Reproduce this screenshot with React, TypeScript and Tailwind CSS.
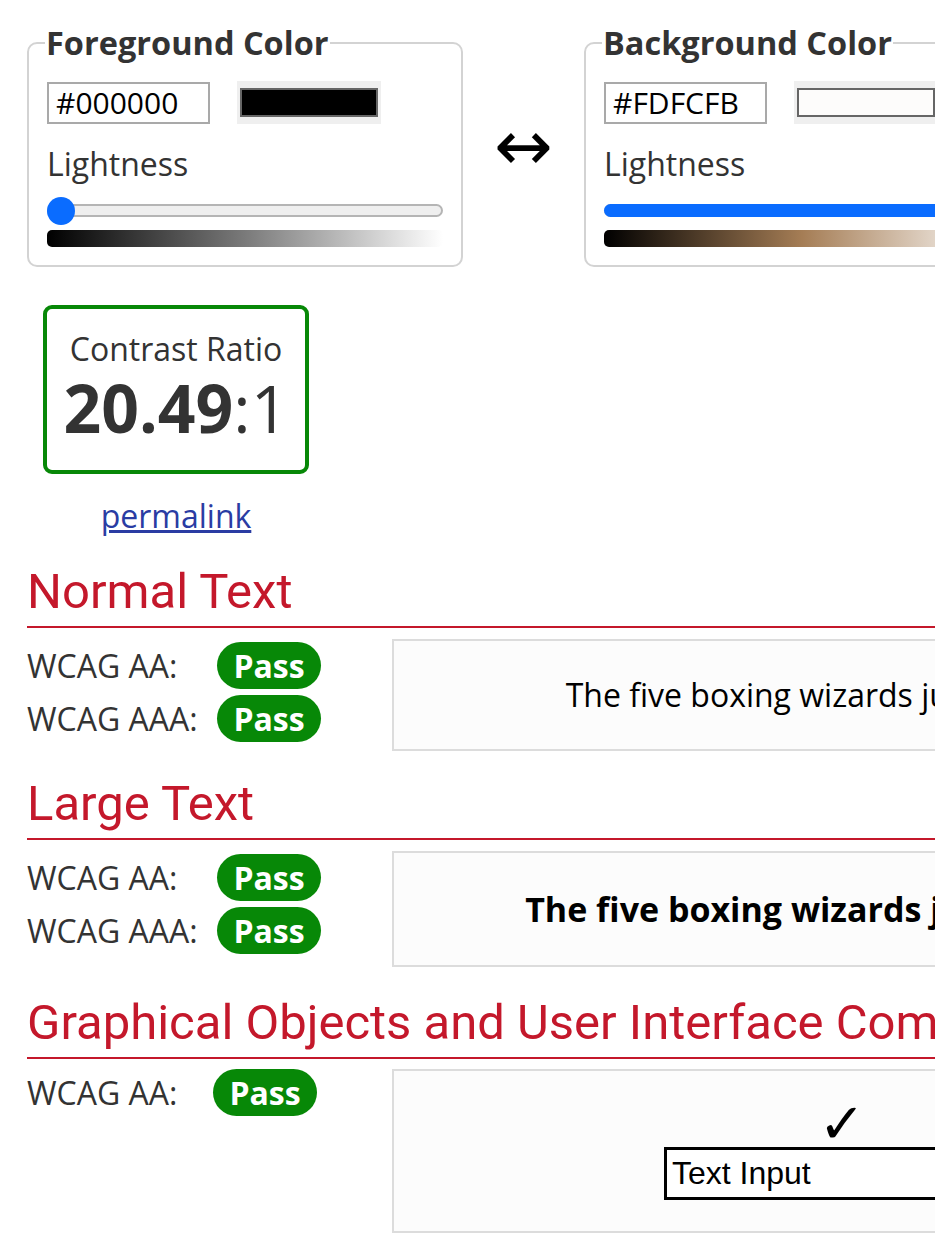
import type { ReactNode } from "react";

const RED = "text-[#c4182b]";

interface ColorPanelProps {
	legend: string;
	hex: string;
	swatch: string;
	thumbAt: number;
	gradient: string;
}

function ColorPanel({ legend, hex, swatch, thumbAt, gradient }: Readonly<ColorPanelProps>) {
	return (
		<fieldset className="w-[436px] shrink-0 rounded-[10px] border-2 border-[#d3d3d3] px-[18px] pb-[18px] pt-[20px]">
			<legend className="-ml-[2px] px-[1px] text-[32.5px] font-bold leading-[36px] text-[#333]">{legend}</legend>
			<div className="flex items-center gap-[27px]">
				<div className="flex h-[42px] w-[163px] items-center border-2 border-[#a9a9a9] bg-white pl-[7px] text-[30px] text-black">
					{hex}
				</div>
				<div className="flex h-[43px] w-[144px] items-center bg-[#efefef] px-[3px]">
					<div className="h-[29px] w-full border-2 border-[#666]" style={{ background: swatch }} />
				</div>
			</div>
			<div className="mt-[20px] text-[32px] leading-[40px] text-[#333]">Lightness</div>
			<div className="relative mt-[13px] h-[28px]">
				<div className="absolute left-0 right-0 top-[7px] h-[13px] rounded-full border-2 border-[#b5b5b5] bg-[#efefef]" />
				{thumbAt > 0 ? (
					<div
						className="absolute left-0 top-[7px] h-[13px] rounded-full bg-[#0a6cff]"
						style={{ width: `${thumbAt}%` }}
					/>
				) : null}
				<div
					className="absolute top-0 h-[28px] w-[28px] rounded-full bg-[#0a6cff]"
					style={{ left: `calc(${thumbAt}% - ${(thumbAt / 100) * 28}px)` }}
				/>
			</div>
			<div className="mt-[5px] h-[17px] rounded-[5px]" style={{ background: gradient }} />
		</fieldset>
	);
}

function PassBadge() {
	return (
		<span className="inline-flex h-[47px] w-[104px] items-center justify-center rounded-full bg-[#078807] text-[32px] font-bold text-white">
			Pass
		</span>
	);
}

function Heading({ children }: Readonly<{ children: ReactNode }>) {
	return (
		<h2
			className={`whitespace-nowrap border-b-2 border-[#c4182b] pb-[6px] font-['Roboto',sans-serif] text-[49px] leading-[56px] ${RED}`}
		>
			{children}
		</h2>
	);
}

function Result({ label }: Readonly<{ label: string }>) {
	return (
		<div className="flex h-[53px] items-center">
			<span className="w-[190px] text-[32px] text-[#333]">{label}</span>
			<PassBadge />
		</div>
	);
}

export default function App() {
	return (
		<div className="h-[1246px] w-[935px] overflow-hidden bg-white font-['Open_Sans',sans-serif] text-[#333]">
			<div className="w-[1292px] pl-[27px] pt-[25px]">
				<div className="flex items-start">
					<ColorPanel
						legend="Foreground Color"
						hex="#000000"
						swatch="#000000"
						thumbAt={0}
						gradient="linear-gradient(to right, #000000, #7a7a7a 50%, #ffffff)"
					/>
					<div className="flex w-[121px] shrink-0 justify-center pt-[86px] font-['DejaVu_Sans',sans-serif] text-[70px] leading-none text-black">
						↔
					</div>
					<ColorPanel
						legend="Background Color"
						hex="#FDFCFB"
						swatch="#fdfcfb"
						thumbAt={99}
						gradient="linear-gradient(to right, #000000, #a57d55 50%, #ffffff)"
					/>
				</div>

				<div className="ml-[16px] mt-[38px] flex w-[266px] flex-col items-center">
					<div className="flex h-[169px] w-[266px] flex-col items-center rounded-[9px] border-4 border-[#078807] pt-[20px]">
						<div className="text-[32px] leading-[40px]">Contrast Ratio</div>
						<div className="text-[66px] leading-[76px]">
							<span className="font-bold">20.49</span>:1
						</div>
					</div>
					<a href="#" className="mt-[20px] text-[32px] leading-[44px] text-[#2a3ca3] underline">
						permalink
					</a>
				</div>

				<section className="mt-[26px]">
					<Heading>Normal Text</Heading>
					<div className="mt-[11px] flex">
						<div className="w-[365px] shrink-0">
							<Result label="WCAG AA:" />
							<Result label="WCAG AAA:" />
						</div>
						<div className="flex h-[112px] flex-1 items-center justify-center whitespace-nowrap border-2 border-[#dcdcdc] bg-[#fcfcfc] text-[32px] text-black">
							The five boxing wizards jump quickly.
						</div>
					</div>
				</section>

				<section className="mt-[25px]">
					<Heading>Large Text</Heading>
					<div className="mt-[11px] flex">
						<div className="w-[365px] shrink-0">
							<Result label="WCAG AA:" />
							<Result label="WCAG AAA:" />
						</div>
						<div className="flex h-[116px] flex-1 items-center justify-center whitespace-nowrap border-2 border-[#dcdcdc] bg-[#fcfcfc] text-[34px] font-bold text-black">
							The five boxing wizards jump quickly.
						</div>
					</div>
				</section>

				<section className="mt-[28px]">
					<Heading>Graphical Objects and User Interface Components</Heading>
					<div className="mt-[10px] flex">
						<div className="flex h-[47px] w-[365px] shrink-0 items-center">
							<span className="w-[186px] text-[32px] text-[#333]">WCAG AA:</span>
							<PassBadge />
						</div>
						<div className="flex h-[164px] flex-1 flex-col items-center justify-center border-2 border-[#dcdcdc] bg-[#fcfcfc] pb-[2px] text-black">
							<div className="font-['DejaVu_Sans',sans-serif] text-[56px] font-bold leading-[46px]">✓</div>
							<div className="flex h-[53px] w-[356px] items-center border-[3px] border-black bg-white pl-[5px] font-['Liberation_Sans',sans-serif] text-[32px]">
								Text Input
							</div>
						</div>
					</div>
				</section>
			</div>
		</div>
	);
}
